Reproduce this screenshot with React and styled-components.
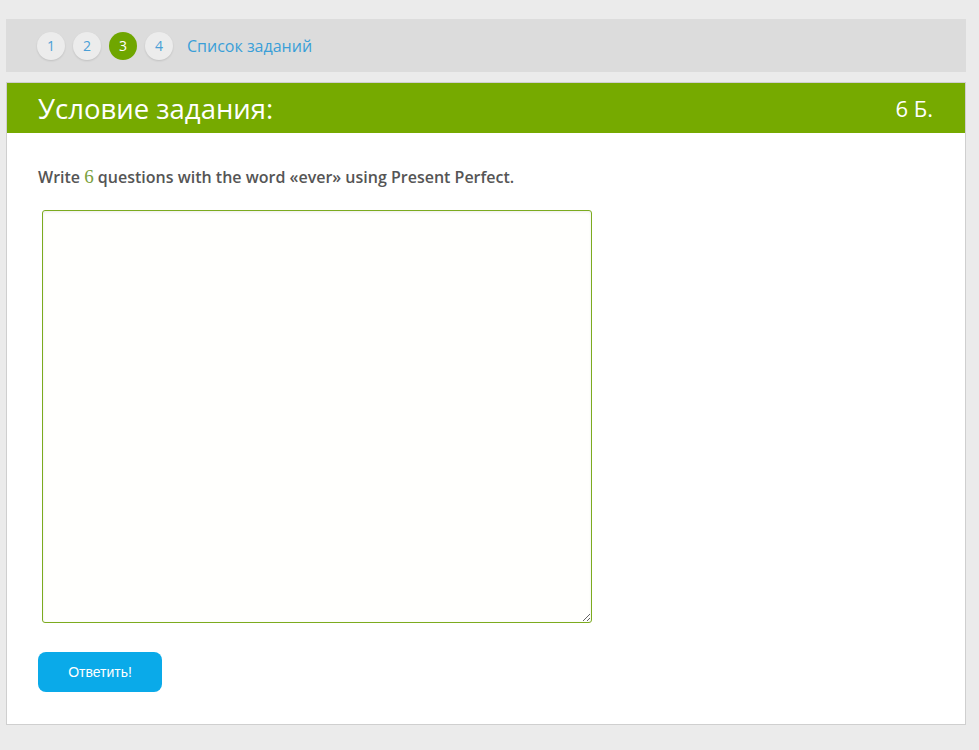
import React from "react";
import styled, { createGlobalStyle } from "styled-components";

const GlobalStyle = createGlobalStyle`
  html, body {
    margin: 0;
    padding: 0;
    background: #ebebeb;
    font-family: "Open Sans", "Liberation Sans", sans-serif;
  }
`;

const Page = styled.div`
  padding: 19px 13px 0 6px;
  display: flex;
  flex-direction: column;
  gap: 10px;
`;

const TopBar = styled.div`
  height: 53px;
  background: #dcdcdc;
  display: flex;
  align-items: center;
  padding-left: 31px;
  gap: 8px;
`;

const Step = styled.a`
  width: 28px;
  height: 28px;
  border-radius: 50%;
  display: flex;
  align-items: center;
  justify-content: center;
  font-size: 14px;
  color: ${(p) => (p.$active ? "#fff" : "#4a9fd6")};
  background: ${(p) => (p.$active ? "#6fa600" : "#ececec")};
  box-shadow: ${(p) => (p.$active ? "none" : "0 1px 2px rgba(0,0,0,0.12)")};
`;

const ListLink = styled.a`
  margin-left: 6px;
  font-size: 16px;
  color: #3a9fd8;
`;

const Panel = styled.div`
  background: #fff;
  border: 1px solid #cfcfcf;
  height: 643px;
  box-sizing: border-box;
  display: flex;
  flex-direction: column;
`;

const Header = styled.div`
  height: 50px;
  background: #76aa00;
  color: #fff;
  display: flex;
  align-items: center;
  justify-content: space-between;
  padding: 0 32px 0 31px;
`;

const Title = styled.h2`
  margin: 0;
  font-weight: 400;
  font-size: 27.5px;
`;

const Score = styled.span`
  font-size: 22px;
`;

const Body = styled.div`
  padding: 32px 31px;
  display: flex;
  flex-direction: column;
  align-items: flex-start;
`;

const Question = styled.p`
  margin: 0;
  font-size: 16px;
  font-weight: 600;
  color: #555;
  line-height: 24px;
`;

const Num = styled.span`
  font-family: "Liberation Serif", serif;
  font-size: 19px;
  font-weight: 400;
  color: #7a9f3c;
`;

const Answer = styled.textarea`
  margin: 21px 0 0 4px;
  width: 550px;
  height: 413px;
  box-sizing: border-box;
  border: 1px solid #7cab1f;
  border-radius: 3px;
  box-shadow: inset 0 1px 3px rgba(0, 0, 0, 0.08);
  background: #fffffd;
  outline: none;
`;

const Submit = styled.button`
  margin-top: 29px;
  width: 124px;
  height: 40px;
  border: none;
  border-radius: 8px;
  background: #0aaae9;
  color: #fff;
  font-family: "Liberation Sans", Arial, sans-serif;
  font-size: 14px;
`;

export default function App() {
  return (
    <>
      <GlobalStyle />
      <Page>
        <TopBar>
          <Step>1</Step>
          <Step>2</Step>
          <Step $active>3</Step>
          <Step>4</Step>
          <ListLink>Список заданий</ListLink>
        </TopBar>
        <Panel>
          <Header>
            <Title>Условие задания:</Title>
            <Score>6 Б.</Score>
          </Header>
          <Body>
            <Question>
              Write <Num>6</Num> questions with the word «ever» using Present Perfect.
            </Question>
            <Answer />
            <Submit>Ответить!</Submit>
          </Body>
        </Panel>
      </Page>
    </>
  );
}
